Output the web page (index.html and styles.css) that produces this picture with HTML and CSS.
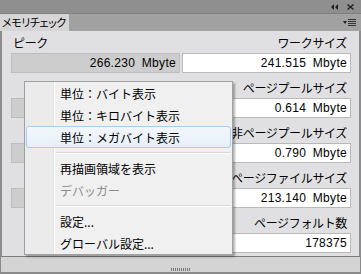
FILE: index.html
```html
<!DOCTYPE html>
<html lang="ja">
<head>
<meta charset="utf-8">
<title>メモリチェック</title>
<link rel="stylesheet" href="styles.css">
</head>
<body>
<div class="panel">
  <div class="titlebar">
    <svg class="ico" width="7" height="6" viewBox="0 0 7 6"><path d="M3 0 L0 3 L3 6 Z M7 0 L4 3 L7 6 Z" fill="#222"/></svg>
    <svg class="ico" width="7" height="6" viewBox="0 0 7 6"><path d="M0.5 0.5 L6.5 5.5 M6.5 0.5 L0.5 5.5" stroke="#222" stroke-width="1.4"/></svg>
  </div>
  <div class="tabrow">
    <div class="tab">メモリチェック</div>
    <div class="tabfill">
      <svg width="13" height="7" viewBox="0 0 13 7"><path d="M0 2 L4 2 L2 5 Z" fill="#222"/><path d="M5 0.5 H13 M5 2.5 H13 M5 4.5 H13 M5 6.5 H13" stroke="#333" stroke-width="1"/></svg>
    </div>
  </div>
  <div class="body">
    <div class="grid">
      <div class="cell"><div class="label left">ピーク</div><div class="box grey">266.230 Mbyte</div></div>
      <div class="cell"><div class="label">ワークサイズ</div><div class="box">241.515 Mbyte</div></div>
      <div class="cell"><div class="label left"></div><div class="box grey"></div></div>
      <div class="cell"><div class="label">ページプールサイズ</div><div class="box">0.614 Mbyte</div></div>
      <div class="cell"><div class="label left"></div><div class="box grey"></div></div>
      <div class="cell"><div class="label">非ページプールサイズ</div><div class="box">0.790 Mbyte</div></div>
      <div class="cell"><div class="label left"></div><div class="box grey"></div></div>
      <div class="cell"><div class="label">ページファイルサイズ</div><div class="box">213.140 Mbyte</div></div>
      <div class="cell"><div class="label left"></div><div class="box none"></div></div>
      <div class="cell"><div class="label">ページフォルト数</div><div class="box">178375</div></div>
    </div>
    <div class="menu">
      <div class="item">単位：バイト表示</div>
      <div class="item">単位：キロバイト表示</div>
      <div class="item active">単位：メガバイト表示</div>
      <div class="sep"></div>
      <div class="item">再描画領域を表示</div>
      <div class="item disabled">デバッガー</div>
      <div class="sep"></div>
      <div class="item">設定...</div>
      <div class="item">グローバル設定...</div>
    </div>
  </div>
  <div class="bottombar"><div class="grip"></div></div>
</div>
</body>
</html>
```

FILE: styles.css
```css
html, body {
  margin: 0;
  padding: 0;
}
body {
  width: 361px;
  height: 274px;
  overflow: hidden;
  background: #8e8e8e;
  font-family: "Noto Sans CJK JP", sans-serif;
  color: #000;
}
.panel {
  display: flex;
  flex-direction: column;
  height: 274px;
}
.titlebar {
  height: 13px;
  background: #8f8f8f;
  display: flex;
  justify-content: flex-end;
  align-items: center;
  gap: 9px;
  padding-right: 7px;
}
.ico { display: block; }
.tabrow {
  height: 18px;
  display: flex;
  background: #a5a5a5;
  border-top: 1px solid #808080;
  box-sizing: border-box;
}
.tab {
  width: 69px;
  background: #d6d6d6;
  font-size: 11px;
  line-height: 17px;
  padding-left: 2px;
  box-sizing: border-box;
  font-feature-settings: "palt";
  letter-spacing: -0.4px;
  white-space: nowrap;
  overflow: hidden;
}
.tabfill {
  flex: 1;
  display: flex;
  justify-content: flex-end;
  align-items: center;
  padding-right: 5px;
  background-image: radial-gradient(#9c9c9c 0.6px, transparent 0.8px);
  background-size: 2px 2px;
}
.body {
  position: relative;
  flex: 1;
  background: #e0e0e3;
  border-left: 2px solid #8d8d8d;
  border-right: 2px solid #8d8d8d;
  border-bottom: 1px solid #7c7c7c;
  padding: 4px 8px 0 9px;
}
.grid {
  display: grid;
  grid-template-columns: 169px 169px;
  column-gap: 2px;
  row-gap: 7px;
}
.cell {
  display: flex;
  flex-direction: column;
}
.label {
  height: 16px;
  line-height: 16px;
  font-size: 12px;
  letter-spacing: -0.35px;
  text-align: right;
  padding-right: 4px;
  margin-bottom: 2px;
  white-space: nowrap;
}
.label.left {
  text-align: left;
  padding-left: 2px;
}
.box {
  height: 20px;
  box-sizing: border-box;
  background: #fff;
  border: 1px solid #b9b9b9;
  font-family: "Liberation Sans", Arial, sans-serif;
  font-size: 12px;
  letter-spacing: 0.3px;
  word-spacing: 3px;
  line-height: 18px;
  text-align: right;
  padding-right: 3px;
}
.box.grey {
  background: #cdcdcd;
  border-color: #bdbdbd;
}
.box.none {
  background: transparent;
  border-color: transparent;
}
.menu {
  position: absolute;
  left: 22px;
  top: 50px;
  width: 209px;
  box-sizing: border-box;
  border: 1px solid #a0a0a0;
  background: #f0f0f0 linear-gradient(to right, #ebebeb 0, #ebebeb 28px, #e2e3e3 28px, #e2e3e3 29px, #fff 29px, #fff 30px, transparent 30px);
  box-shadow: 2px 2px 2px rgba(0, 0, 0, 0.3);
  padding: 0 1px;
}
.item {
  height: 22px;
  line-height: 22px;
  font-size: 12px;
  padding-left: 33px;
  box-sizing: border-box;
  border: 1px solid transparent;
  border-radius: 3px;
  white-space: nowrap;
}
.item.active {
  background: linear-gradient(#f3f7fc, #e7eff9);
  border-color: #aaccf1;
}
.item.disabled {
  color: #8d8d8d;
}
.sep {
  height: 9px;
  margin-left: 30px;
  background: linear-gradient(#f0f0f0 0, #f0f0f0 4px, #d7d7d7 4px, #d7d7d7 5px, #fff 5px, #fff 6px, #f0f0f0 6px);
}
.bottombar {
  height: 14px;
  background: #d4d4d4;
  border-bottom: 2px solid #8a8a8a;
  border-left: 1px solid #8a8a8a;
  border-right: 1px solid #8a8a8a;
  display: flex;
  justify-content: center;
  align-items: flex-end;
  padding-bottom: 1px;
}
.grip {
  width: 19px;
  height: 3px;
  background: repeating-linear-gradient(to right, #777 0, #777 1px, transparent 1px, transparent 2px);
}
```
